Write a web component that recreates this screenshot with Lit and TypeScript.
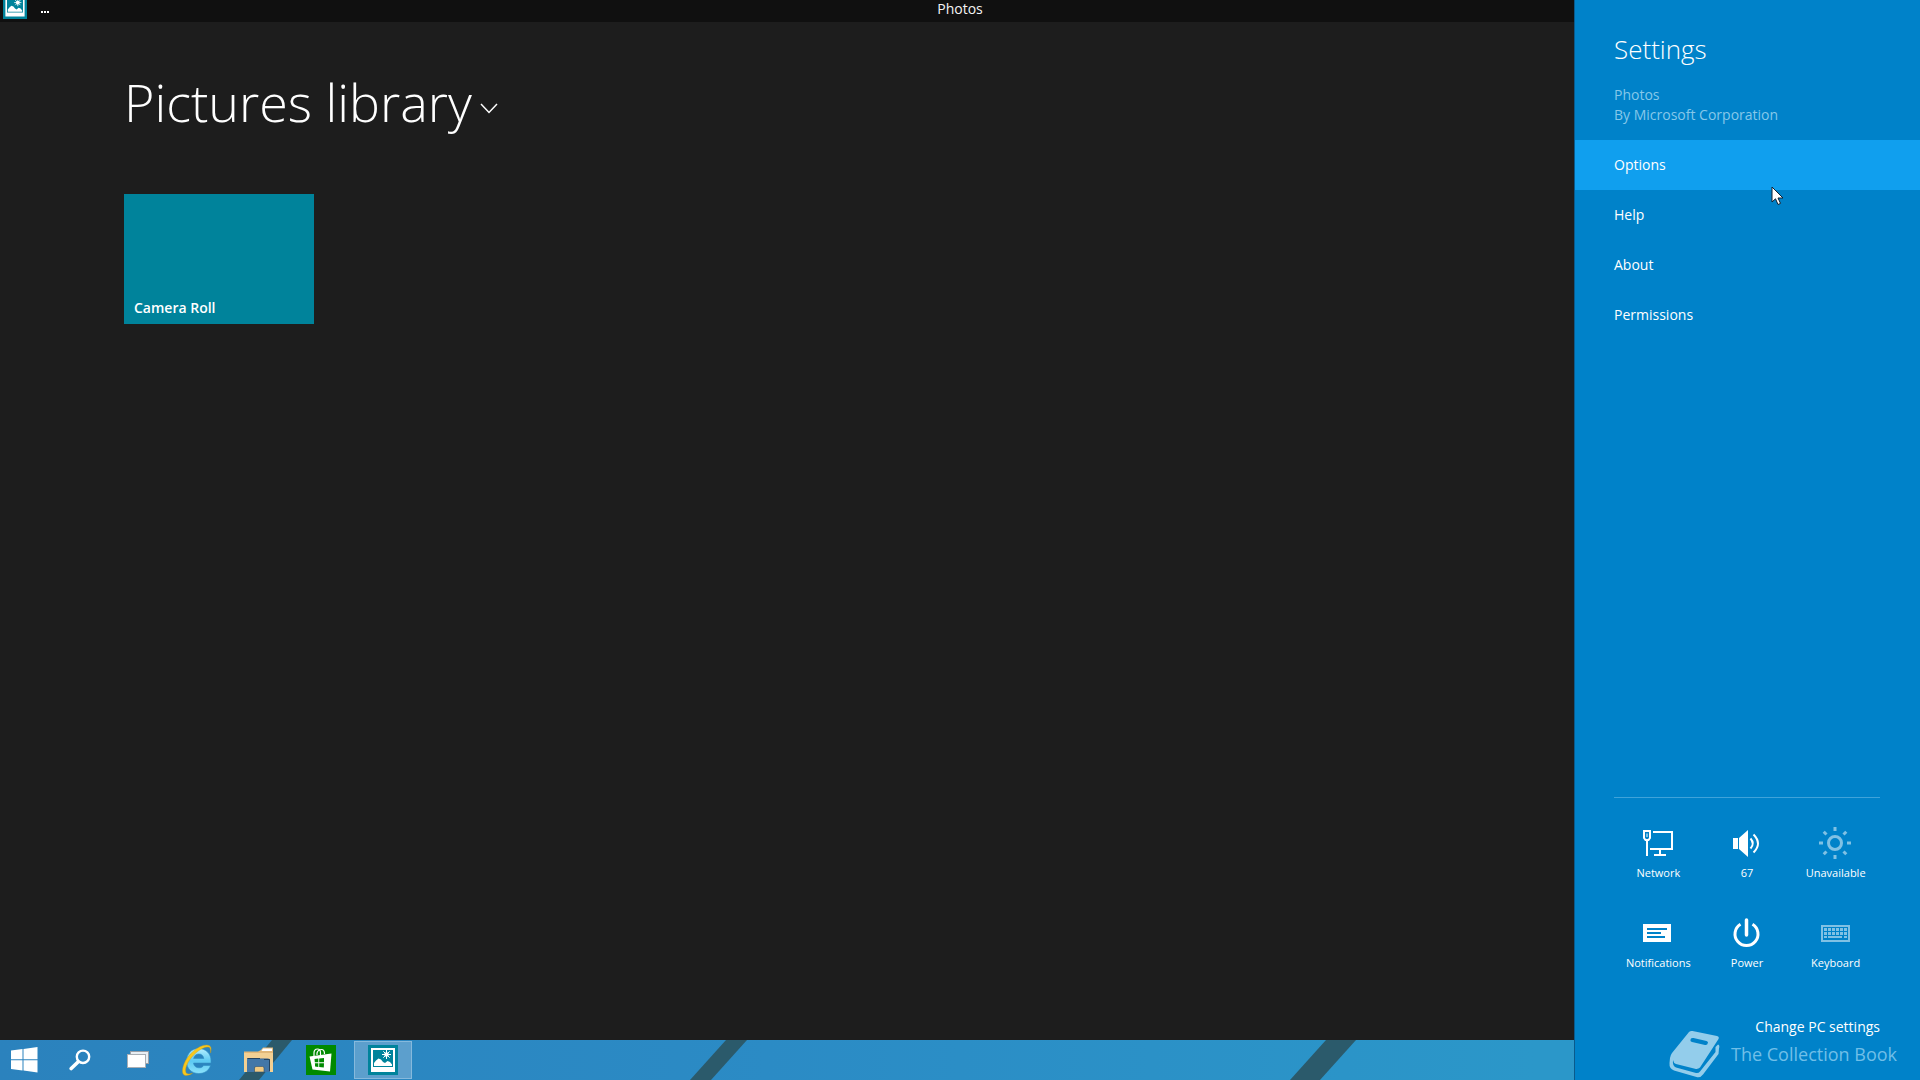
import { LitElement, html, css, svg } from "lit";
import { customElement, state } from "lit/decorators.js";

const photoIcon = (size: number) => html`
  <svg width=${size} height=${size} viewBox="0 0 30 30" aria-hidden="true">
    <rect width="30" height="30" fill="#00839b" />
    <path fill="#fff" fill-rule="evenodd" d="M3 3H27V27H3ZM5 5V22H25V5Z" />
    <path fill="#fff" d="M6 21V18L8 15.500L10.500 13.500L13 14.500L15 17L17 18L19.500 16L22 17L24 19.500V21Z" />
    <circle cx="18.500" cy="9.500" r="2.300" fill="#fff" />
    <path stroke="#fff" stroke-width="1" d="M18.500 5V14M14 9.500H23M15.300 6.300L21.700 12.700M21.700 6.300L15.300 12.700" />
  </svg>
`;

const icons = {
  start: html`<svg width="28" height="26" viewBox="0 0 28 26" aria-hidden="true">
    <path fill="#fff" d="M0 3.500L11.500 2V12.300H0ZM12.500 1.900L26.500 0V12.300H12.500ZM0 13.300H11.500V23.500L0 22ZM12.500 13.300H26.500V25.500L12.500 23.600Z" />
  </svg>`,
  search: html`<svg width="22" height="22" viewBox="0 0 22 22" aria-hidden="true">
    <circle cx="14" cy="7.800" r="6.200" fill="none" stroke="#fff" stroke-width="2.400" />
    <path stroke="#fff" stroke-width="3.600" stroke-linecap="round" d="M9 13L2.200 19.500" />
  </svg>`,
  tasks: html`<svg width="22" height="18" viewBox="0 0 22 18" aria-hidden="true">
    <rect x="3.500" y="0.500" width="18" height="12" fill="#e8eef3" stroke="#9a9fa6" />
    <rect x="0.500" y="3.500" width="18" height="13" fill="#fff" stroke="#a8aeb4" />
  </svg>`,
  ie: html`<svg width="32" height="32" viewBox="0 0 32 32" aria-hidden="true">
    <defs>
      <linearGradient id="ie-blue" x1="0" y1="0" x2="0" y2="1">
        <stop offset="0" stop-color="#b7f0ff" />
        <stop offset="0.500" stop-color="#5cc9f2" />
        <stop offset="1" stop-color="#8be2fb" />
      </linearGradient>
    </defs>
    <path
      fill="url(#ie-blue)"
      stroke="#2f8fc4"
      stroke-width="0.600"
      fill-rule="evenodd"
      d="M17.500 4.500C25 4.500 30 10 30 16.500V19H12.500C12.800 22 15 23.800 18 23.800C20.200 23.800 21.800 23 22.600 21.500H29.500C28 26.500 23.500 29.500 17.800 29.500C10.500 29.500 5.500 24.300 5.500 17.200C5.500 9.800 10.700 4.500 17.500 4.500ZM12.600 14.500H22.800C22.500 11.800 20.600 10 17.800 10C15 10 13 11.800 12.600 14.500Z"
    />
    <path
      fill="#f8c71c"
      stroke="#c99a1a"
      stroke-width="0.400"
      d="M29.500 9C31 4.500 30 1 25.500 1C17 1 6.500 11 3 20C0.500 26.500 1 31.500 5 31.500C7 31.500 9.500 30.500 11.500 29.200C8.500 30.300 5.500 30.500 4.800 28C3.500 23 8.500 14.500 15 8.800C21 3.600 27.500 1.700 29 4.200C29.600 5.300 29.700 7 29.500 9Z"
    />
  </svg>`,
  explorer: html`<svg width="32" height="26" viewBox="0 0 32 26" aria-hidden="true">
    <path fill="#e2b778" d="M1 4.500H15L18 3L20 0.500H30V12H1Z" />
    <path fill="#fff" d="M20 1.500H29V4H18.500Z" />
    <path fill="#f3d093" d="M1 6H30V25H27V13Q27 11 25 11H6Q4 11 4 13V25H1Z" />
    <path fill="#4377a8" d="M4 25V14Q4 11.500 6.500 11.500H24.500Q27 11.500 27 14V25H21V20H11.500V25Z" />
    <path fill="none" stroke="#24435f" d="M4.500 12V11.500H17M21 12.500H26.500V24" />
    <path fill="#f1c981" stroke="#31506e" stroke-width="0.600" d="M11.500 25V21Q11.500 19.500 13 19.500H19.500Q21 19.500 21 21V25Z" />
  </svg>`,
  store: html`<svg width="30" height="30" viewBox="0 0 30 30" aria-hidden="true">
    <rect width="30" height="30" fill="#008a00" />
    <path fill="none" stroke="#fff" stroke-width="1.200" d="M8 11V8Q8 4 11.500 4Q14.500 4 14.500 8V10M11 10V8Q12 4.500 15.500 4.500Q18.500 4.500 18.500 9" />
    <path fill="#fff" d="M3.500 11.500L25.500 8.500L24 26.500L6.500 24.500Z" />
    <path fill="#008a00" d="M8.500 14L12.300 13.600V17.300H8.800ZM13.200 13.500L18 13V17.300H13.200ZM8.900 18.200H12.300V22L9.100 21.600ZM13.200 18.200H18L17.800 22.600L13.200 22.100Z" />
  </svg>`,
  photos: photoIcon(30),
  network: html`<svg width="32" height="32" viewBox="0 0 32 32" aria-hidden="true">
    <g fill="none" stroke="#fff" stroke-width="2">
      <path d="M12 5H31V22H9M19 22V27M13 28H25" />
      <path d="M3 4H9V11L7.500 13H4.500L3 11ZM6 13V29" />
    </g>
    <path stroke="#fff" d="M6 6.500V10" />
  </svg>`,
  volume: html`<svg width="32" height="32" viewBox="0 0 32 32" aria-hidden="true">
    <path fill="#fff" d="M3 11H8V22H3ZM9 11L18 3V30L9 22Z" />
    <g fill="none" stroke="#fff" stroke-width="2">
      <path d="M20.500 11.500Q25 16.500 20.500 21.500M23.500 7.500Q32.500 16.500 23.500 25.500" />
    </g>
  </svg>`,
  brightness: html`<svg width="34" height="34" viewBox="0 0 34 34" aria-hidden="true">
    <g fill="none" stroke="#80c1e4">
      <circle cx="17" cy="17" r="6.500" stroke-width="3" />
      <path stroke-width="3" d="M17 1V5M17 29V33M1 17H5M29 17H33M5.700 5.700L8.500 8.500M25.500 25.500L28.300 28.300M28.300 5.700L25.500 8.500M8.500 25.500L5.700 28.300" />
    </g>
  </svg>`,
  notifications: html`<svg width="32" height="32" viewBox="0 0 32 32" aria-hidden="true">
    <rect x="2" y="7" width="28" height="18" fill="#fff" />
    <path stroke="#0082c9" stroke-width="2" d="M6 12H26M6 16H20M6 20H24" />
  </svg>`,
  power: html`<svg width="32" height="32" viewBox="0 0 32 32" aria-hidden="true">
    <g fill="none" stroke="#fff">
      <path stroke-width="3.500" stroke-linecap="round" d="M16.500 3V18" />
      <path stroke-width="3" d="M10.500 7.200A11.500 11.500 0 1 0 22.500 7.200" />
    </g>
  </svg>`,
  keyboard: html`<svg width="32" height="32" viewBox="0 0 32 32" aria-hidden="true">
    <rect x="3" y="9" width="27" height="15" fill="none" stroke="#80c1e4" stroke-width="2" />
    <g stroke="#80c1e4" stroke-width="3" stroke-dasharray="3 1">
      <path d="M5 12.500H28M5 16.500H28" />
    </g>
    <path stroke="#80c1e4" stroke-width="2" d="M5 20H8M9 20H23M25 20H28" />
  </svg>`,
};

type IconName = keyof typeof icons;

const TASKBAR: { icon: IconName; label: string; size: string }[] = [
  { icon: "start", label: "Start", size: "start" },
  { icon: "search", label: "Search", size: "search" },
  { icon: "tasks", label: "Task view", size: "tasks" },
  { icon: "ie", label: "Internet Explorer", size: "app" },
  { icon: "explorer", label: "File Explorer", size: "app" },
  { icon: "store", label: "Store", size: "app" },
  { icon: "photos", label: "Photos", size: "app running" },
];

const QUICK: { icon: IconName; label: string }[] = [
  { icon: "network", label: "Network" },
  { icon: "volume", label: "67" },
  { icon: "brightness", label: "Unavailable" },
  { icon: "notifications", label: "Notifications" },
  { icon: "power", label: "Power" },
  { icon: "keyboard", label: "Keyboard" },
];

const reset = css`
  * {
    box-sizing: border-box;
  }
  button {
    margin: 0;
    padding: 0;
    border: 0;
    background: none;
    color: inherit;
    font: inherit;
    text-align: left;
  }
  svg {
    display: block;
  }
  h1,
  h2,
  p,
  ul {
    margin: 0;
    padding: 0;
    font-weight: inherit;
    list-style: none;
  }
`;

@customElement("photos-app")
export class PhotosApp extends LitElement {
  static styles = [
    reset,
    css`
      :host {
        display: flex;
        flex-direction: column;
        background: #1d1d1d;
      }
      .titlebar {
        display: grid;
        grid-template-columns: 1fr auto 1fr;
        align-items: start;
        height: 22px;
        background: #101010;
        color: #f4f4f4;
        font-size: 14px;
        line-height: 18px;
      }
      .tools {
        display: flex;
        align-items: flex-end;
        gap: 14px;
        height: 19px;
        padding-left: 3px;
      }
      .more {
        height: 14px;
      }
      .content {
        flex: 1;
        padding: 48px 124px;
      }
      .heading {
        display: flex;
        align-items: center;
        gap: 8px;
        height: 108px;
        padding-bottom: 44px;
      }
      .title {
        font-size: 52px;
        font-weight: 300;
        line-height: 72px;
        white-space: nowrap;
      }
      .chevron {
        padding-top: 12px;
      }
      .tiles {
        display: flex;
        flex-wrap: wrap;
        gap: 10px;
        padding-top: 16px;
      }
      .tile {
        display: flex;
        align-items: flex-end;
        width: 190px;
        height: 130px;
        padding: 6px 10px;
        background: #00839b;
        font-size: 14px;
        font-weight: 600;
        line-height: 20px;
      }
    `,
  ];

  render() {
    return html`
      <header class="titlebar">
        <div class="tools">
          ${photoIcon(24)}
          <button class="more" aria-label="App commands">
            <svg width="8" height="3" viewBox="0 0 8 3" aria-hidden="true">
              <path fill="#fff" d="M0 0H2V2H0ZM3 0H5V2H3ZM6 0H8V2H6Z" />
            </svg>
          </button>
        </div>
        <span>Photos</span>
      </header>
      <main class="content">
        <div class="heading">
          <h1 class="title">Pictures library</h1>
          <button class="chevron" aria-label="Choose library">
            <svg width="18" height="11" viewBox="0 0 18 11" aria-hidden="true">
              <path fill="none" stroke="#fff" stroke-width="1.500" d="M1 1L9 9.500L17 1" />
            </svg>
          </button>
        </div>
        <div class="tiles"><button class="tile">Camera Roll</button></div>
      </main>
    `;
  }
}

@customElement("task-bar")
export class TaskBar extends LitElement {
  static styles = [
    reset,
    css`
      :host {
        display: flex;
        position: relative;
        height: 40px;
        overflow: hidden;
        background: linear-gradient(90deg, #2b82bd, #2b8bc5 40%, #2b97c9 80%);
      }
      .wallpaper {
        position: absolute;
        left: 0;
        top: 0;
      }
      .buttons {
        display: flex;
        position: relative;
      }
      .item {
        display: flex;
        align-items: center;
        justify-content: center;
        height: 40px;
      }
      .start {
        width: 50px;
      }
      .search {
        width: 60px;
      }
      .tasks {
        width: 56px;
      }
      .app {
        width: 62px;
      }
      .running {
        width: 58px;
        height: 38px;
        margin: 1px 2px;
        border: 1px solid #86b9dc;
        background: #5c9fcd;
      }
    `,
  ];

  render() {
    return html`
      <svg class="wallpaper" width="1920" height="40" viewBox="0 0 1920 40" aria-hidden="true">
        ${[
          [239, 272, 20],
          [690, 726, 21],
          [1290, 1326, 30],
        ].map(
          ([foot, head, width]) =>
            svg`<path fill="#2b5a6b" d="M${foot} 40L${head} 0H${head + width}L${foot + width} 40Z" />`
        )}
      </svg>
      <nav class="buttons" aria-label="Taskbar">
        ${TASKBAR.map(
          (t) => html`<button class="item ${t.size}" aria-label=${t.label}>${icons[t.icon]}</button>`
        )}
      </nav>
    `;
  }
}

@customElement("settings-pane")
export class SettingsPane extends LitElement {
  static styles = [
    reset,
    css`
      :host {
        display: flex;
        flex-direction: column;
        width: 346px;
        border-left: 1px solid #0a5a8c;
        background: #0082c9;
      }
      .title {
        padding: 31px 39px 0;
        font-size: 26px;
        font-weight: 300;
        line-height: 36px;
      }
      .about {
        padding: 18px 39px 15px;
        color: #86c8ea;
        font-size: 14px;
        line-height: 20px;
      }
      .entry {
        display: block;
        width: 100%;
        padding: 0 39px;
        font-size: 14px;
        line-height: 50px;
      }
      .entry.active {
        background: #109fee;
      }
      .quick {
        display: grid;
        grid-template-columns: repeat(3, 1fr);
        margin: auto 40px 0 39px;
        padding-top: 22px;
        border-top: 1px solid #3fa3da;
      }
      .control {
        display: flex;
        flex-direction: column;
        align-items: center;
        height: 90px;
        font-size: 11px;
        line-height: 16px;
      }
      .glyph {
        display: grid;
        place-items: center;
        height: 45px;
        padding-right: 2px;
      }
      .more {
        align-self: flex-end;
        margin: 17px 40px 43px;
        color: #fff;
        font-size: 14px;
        line-height: 20px;
        text-decoration: none;
      }
    `,
  ];

  @state() private active = "Options";

  render() {
    return html`
      <h2 class="title">Settings</h2>
      <div class="about">
        <p>Photos</p>
        <p>By Microsoft Corporation</p>
      </div>
      <ul>
        ${["Options", "Help", "About", "Permissions"].map(
          (name) => html`<li>
            <button
              class="entry ${name === this.active ? "active" : ""}"
              @mouseenter=${() => (this.active = name)}
            >
              ${name}
            </button>
          </li>`
        )}
      </ul>
      <div class="quick">
        ${QUICK.map(
          (q) => html`<button class="control">
            <span class="glyph">${icons[q.icon]}</span>
            <span>${q.label}</span>
          </button>`
        )}
      </div>
      <a class="more" href="#pc-settings">Change PC settings</a>
    `;
  }
}

@customElement("app-root")
export class AppRoot extends LitElement {
  static styles = [
    reset,
    css`
      :host {
        display: flex;
        position: relative;
        flex-direction: column;
        min-height: 100vh;
        overflow: hidden;
        color: #fff;
        font-family: "Segoe UI", "Open Sans", "Noto Sans", sans-serif;
      }
      photos-app {
        flex: 1;
      }
      settings-pane {
        position: absolute;
        top: 0;
        right: 0;
        bottom: 0;
      }
      .watermark {
        display: flex;
        position: absolute;
        right: 23px;
        bottom: 2px;
        align-items: center;
        gap: 11px;
        color: #70bfe8;
        font-size: 18px;
        line-height: 24px;
        pointer-events: none;
      }
      .cursor {
        position: absolute;
        top: 186px;
        right: 136px;
        pointer-events: none;
      }
    `,
  ];

  render() {
    return html`
      <photos-app></photos-app>
      <task-bar></task-bar>
      <settings-pane></settings-pane>
      <div class="watermark">
        <svg width="51" height="48" viewBox="0 0 51 48" aria-hidden="true">
          <path
            fill="#93cdeb"
            fill-rule="evenodd"
            d="M20 2Q21.500 0.500 23.500 1L48 6Q50.500 6.500 49.500 9L31 37.500Q29 39.500 26 38.800L7 34Q4.500 33.300 4 30Q3.300 36 7 37.500L27 43Q29.500 43.500 31 41.500L46.500 22V17L49 14.500Q51 15 50 18.500L49.500 24L34 44.500Q31.500 48 27.500 47L5 40.500Q0 38.500 0.500 33L1 28Q1.500 25 3 23ZM22 8.500Q20.500 11.500 23 12L36 15Q38.500 15.500 39 12.500Q39 11.500 37.500 11L24.500 8Q22.500 7.700 22 8.500Z"
          />
        </svg>
        <span>The Collection Book</span>
      </div>
      <svg class="cursor" width="13" height="20" viewBox="0 0 13 20" aria-hidden="true">
        <path fill="#fff" stroke="#102030" d="M1 1V16L4.500 12.800L7 18.500L9.500 17.400L7 12H12Z" />
      </svg>
    `;
  }
}
